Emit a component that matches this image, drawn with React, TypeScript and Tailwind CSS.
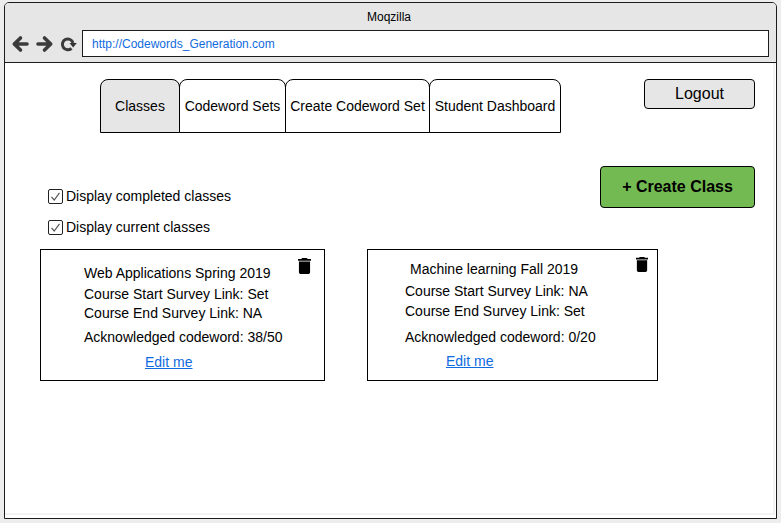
import React from "react";

const tabs = [
  { label: "Classes", box: "w-[80px] bg-[#e6e6e6]" },
  { label: "Codeword Sets", box: "w-[107px] -ml-px" },
  { label: "Create Codeword Set", box: "w-[145px] -ml-px" },
  { label: "Student Dashboard", box: "w-[132px] -ml-px" },
];

function Trash({ className }: { className: string }) {
  return (
    <svg className={className} viewBox="5 3 14 18" preserveAspectRatio="none" fill="#000">
      <path d="M6 19c0 1.1.9 2 2 2h8c1.1 0 2-.9 2-2V7H6v12zM19 4h-3.5l-1-1h-5l-1 1H5v2h14V4z" />
    </svg>
  );
}

function Check({ label }: { label: string }) {
  return (
    <label className="flex h-4 items-center leading-4">
      <span className="mr-[3px] flex h-[15px] w-[15px] items-center justify-center rounded-[2px] border border-[#222] bg-white">
        <svg className="h-[11px] w-[11px]" viewBox="0 0 11 11" fill="none" stroke="#555" strokeWidth="1.2">
          <path d="M1.5 5.8 4.2 9 9.5 1.8" />
        </svg>
      </span>
      {label}
    </label>
  );
}

export default function App() {
  return (
    <div className="h-[523px] w-[781px] overflow-hidden bg-[#ededed] pl-1 pt-[2px] font-['Liberation_Sans',Arial,sans-serif] text-[14px] text-black">
      <div className="flex h-[517px] w-[773px] flex-col rounded-t-[5px] border border-[#1c1c1e] bg-white">
        <header className="h-[60px] shrink-0 rounded-t-[4px] border-b border-[#1c1c1e] bg-[#e6e6e6]">
          <div className="flex h-[27px] items-center justify-center pr-[3px] text-[12px]">Moqzilla</div>
          <div className="flex h-[27px] items-center">
            <svg className="ml-[6px] h-[18px] w-[66px] shrink-0" viewBox="0 0 66 18" fill="none" stroke="#3b3b3b" strokeWidth="3.6" strokeLinecap="round" strokeLinejoin="round">
              <path d="M16 9H4M9.5 3 3.3 9l6.2 6" />
              <path d="M27 9h12M33.5 3l6.200 6-6.200 6" />
              <path d="M60.500 13.300A5.400 5.400 0 1 1 62 8" strokeWidth="3" strokeLinecap="butt" />
              <path d="M58.500 8h7.300l-3.600 4.500z" fill="#333" stroke="none" />
            </svg>
            <div className="ml-[5px] flex h-[27px] w-[687px] items-center border border-[#1c1c1e] bg-white pl-[9px] text-[12px] text-[#0f6be0]">
              http://Codewords_Generation.com
            </div>
          </div>
        </header>
        <main className="mr-px flex h-[452px] flex-col border-b-2 border-r-2 border-[#f3f3f3] pl-[35px] pt-4">
          <div className="flex justify-between pl-[60px] pr-[18px]">
            <nav className="flex">
              {tabs.map((t) => (
                <div key={t.label} className={`flex h-[54px] items-center justify-center whitespace-nowrap rounded-t-[8px] border border-black ${t.box}`}>
                  {t.label}
                </div>
              ))}
            </nav>
            <button className="h-[30px] w-[111px] rounded-[4px] border border-black bg-[#e6e6e6] text-[16px]">Logout</button>
          </div>
          <div className="mt-[33px] flex justify-between pl-2 pr-[18px]">
            <div className="flex flex-col gap-[15px] pt-[22px]">
              <Check label="Display completed classes" />
              <Check label="Display current classes" />
            </div>
            <button className="h-[42px] w-[155px] rounded-[4px] border border-black bg-[#72ba51] text-[16px] font-bold">+ Create Class</button>
          </div>
          <div className="mt-[14px] flex gap-[42px]">
            <section className="flex h-[132px] w-[285px] justify-between border border-black pl-[43px] pr-[13px] leading-4">
              <div className="flex flex-col whitespace-nowrap pt-[15px]">
                <h2>Web Applications Spring 2019</h2>
                <p className="mt-[5px]">Course Start Survey Link: Set</p>
                <p className="mt-[3px]">Course End Survey Link: NA</p>
                <p className="mt-2">Acknowledged codeword: 38/50</p>
                <a className="ml-[61px] mt-[9px] self-start text-[#0f6be0] underline">Edit me</a>
              </div>
              <Trash className="mt-2 h-4 w-[13px]" />
            </section>
            <section className="flex h-[132px] w-[291px] justify-between border border-black pl-[37px] pr-[9px] leading-4">
              <div className="flex flex-col whitespace-nowrap pt-[11px]">
                <h2 className="ml-[5px]">Machine learning Fall 2019</h2>
                <p className="mt-[6px]">Course Start Survey Link: NA</p>
                <p className="mt-1">Course End Survey Link: Set</p>
                <p className="mt-[10px]">Acknowledged codeword: 0/20</p>
                <a className="ml-[41px] mt-2 self-start text-[#0f6be0] underline">Edit me</a>
              </div>
              <Trash className="mt-[7px] h-[15px] w-3" />
            </section>
          </div>
        </main>
      </div>
    </div>
  );
}
